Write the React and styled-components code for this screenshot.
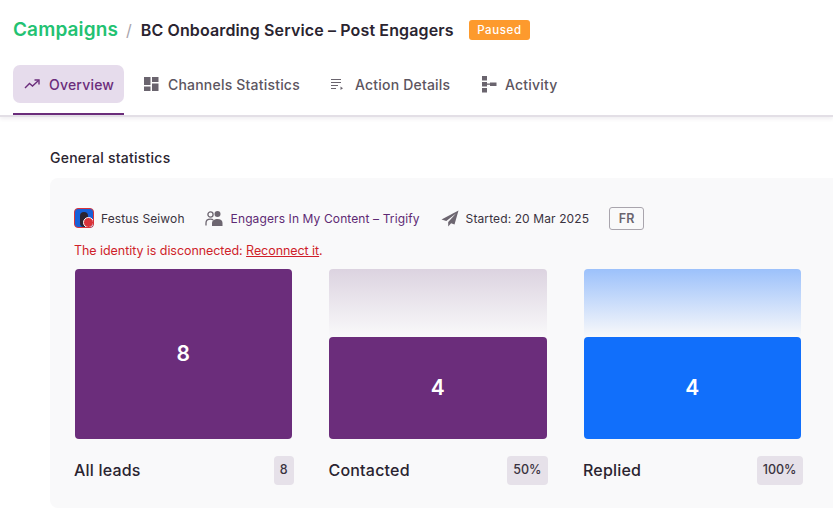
import React from "react";
import styled, { createGlobalStyle } from "styled-components";

const Global = createGlobalStyle`
  html, body { margin: 0; padding: 0; background: #fff; overflow: hidden; }
  body { width: 833px; height: 522px; font-family: "Inter", "Liberation Sans", sans-serif; color: #29222e; }
`;
const Page = styled.div`width: 833px; height: 522px; overflow: hidden;`;
const Header = styled.header`
  height: 117px; box-sizing: border-box; border-bottom: 2px solid #e3dfe6;
  box-shadow: 0 2px 4px rgba(60, 40, 80, 0.08); padding: 0 13px;
  display: flex; flex-direction: column;
`;
const TitleRow = styled.div`display: flex; align-items: center; height: 30px; margin-top: 15px;`;
const Crumb = styled.span`font-size: 19px; font-weight: 600; color: #22c272; letter-spacing: 0.12px;`;
const Slash = styled.span`font-size: 16px; color: #a8a3ac; margin: 0 9px 0 8px;`;
const Title = styled.h1`margin: 0; font-size: 16px; font-weight: 600; color: #2a2430; letter-spacing: 0.13px; white-space: nowrap;`;
const Status = styled.span`
  margin-left: 15px; background: #fd9a2d; color: #fff; font-size: 11.5px; font-weight: 500;
  letter-spacing: 0.6px; height: 20px; padding: 0 8.5px; border-radius: 3px; display: flex; align-items: center;
`;
const Tabs = styled.nav`display: flex; margin-top: 21px; gap: 0;`;
const Tab = styled.div`
  display: flex; flex-direction: column; width: ${p => p.$w}px; margin-right: ${p => p.$mr || 0}px;
  height: 50px; box-sizing: border-box; border-bottom: 2px solid ${p => (p.$active ? "#6b2d7b" : "transparent")};
`;
const TabInner = styled.div`
  display: flex; align-items: center; gap: ${p => p.$gap || 9}px; height: 38px; padding-left: 11px; border-radius: 7px;
  background: ${p => (p.$active ? "#e6dcec" : "transparent")};
  color: ${p => (p.$active ? "#6b2d7b" : "#5c5560")};
  font-size: 14px; font-weight: 500; letter-spacing: 0.2px; white-space: nowrap;
`;
const Main = styled.main`padding: 32px 0 0 50px;`;
const SectionTitle = styled.h2`margin: 0 0 11px; font-size: 14px; font-weight: 500; line-height: 18px; color: #2a2430; letter-spacing: 0.25px;`;
const Card = styled.section`
  width: 820px; height: 330px; box-sizing: border-box; background: #f9f9fa; border-radius: 8px 0 0 8px; padding: 28px 0 0 24px;
`;
const Meta = styled.div`display: flex; align-items: center; height: 24px; font-size: 12px; color: #3a3340; letter-spacing: 0.11px;`;
const Avatar = styled.div`
  position: relative; width: 20px; height: 20px; border-radius: 4px; background: #1660d8; border: 1px solid #d8333a;
  box-sizing: border-box; overflow: hidden; margin-right: 7px;
`;
const AvatarHead = styled.div`position: absolute; left: 5px; top: 3px; width: 8px; height: 15px; border-radius: 4px; background: #2b2430;`;
const AvatarDot = styled.div`position: absolute; right: -1px; bottom: -1px; width: 11px; height: 11px; border-radius: 50%; background: #d8333a; border: 1px solid #fff; box-sizing: border-box;`;
const MetaLink = styled.span`color: #5e2a74; margin-left: 8px; margin-right: 21px;`;
const Name = styled.span`margin-right: 20px;`;
const Started = styled.span`margin-left: 7px; margin-right: 20px;`;
const Lang = styled.span`
  width: 35px; height: 23px; box-sizing: border-box; border: 1px solid #a9a5ad; border-radius: 3px; color: #6a646e;
  font-size: 12.5px; font-weight: 600; display: flex; align-items: center; justify-content: center;
`;
const ErrorLine = styled.div`margin-top: 13px; height: 16px; line-height: 16px; font-size: 12.5px; letter-spacing: -0.06px; color: #cf1f2a;`;
const Reconnect = styled.span`text-decoration: underline;`;
const Stats = styled.div`display: flex; gap: 35px; margin-top: 10px;`;
const Stat = styled.div`width: 219.5px;`;
const Bar = styled.div`
  height: 170px; margin-left: 0.6px; width: 217.5px; display: flex; flex-direction: column;
`;
const Ghost = styled.div`
  height: ${p => p.$h}px; border-radius: 4px 4px 0 0;
  background: linear-gradient(to bottom, ${p => p.$from}, #f9f9fa);
`;
const Fill = styled.div`
  flex: 1; background: ${p => p.$c}; border-radius: 4px; color: #fff; font-size: 21px; font-weight: 600;
  display: flex; align-items: center; justify-content: center; padding-bottom: 2px;
`;
const StatFoot = styled.div`display: flex; justify-content: space-between; align-items: center; margin-top: 17px; height: 29px;`;
const StatLabel = styled.span`font-size: 16px; font-weight: 500; color: #2a2430; letter-spacing: 0.2px; padding-bottom: 2px;`;
const Pct = styled.span`
  height: 29px; padding: 0 ${p => p.$px}px 3px; background: #e6e1e9; border-radius: 4px; font-size: 12.5px; font-weight: 500; color: #3a3340;
  display: flex; align-items: center; box-sizing: border-box;
`;

const TrendIcon = () => (
  <svg width="16" height="16" viewBox="0 0 16 16" fill="none" stroke="#6b2d7b" strokeWidth="1.4">
    <path d="M1 12l4.5-4.5 3 2.5L14.5 4.5" /><path d="M10.5 4h4.5v4.5" />
  </svg>
);
const GridIcon = () => (
  <svg width="16" height="16" viewBox="0 0 16 16" fill="#6a646e">
    <rect x="1" y="1" width="6.5" height="8" /><rect x="9" y="1" width="6.5" height="5" />
    <rect x="1" y="10.5" width="6.5" height="4.5" /><rect x="9" y="7.5" width="6.5" height="7.5" />
  </svg>
);
const ListIcon = () => (
  <svg width="14" height="14" viewBox="0 0 14 14" fill="none" stroke="#6a646e" strokeWidth="1.2">
    <path d="M1 2.5h10M1 5.5h10M1 8.5h7M1 11.5h5" /><path d="M10.5 9.5v3.5l2.5-1.8z" fill="#6a646e" stroke="none" />
  </svg>
);
const TreeIcon = () => (
  <svg width="16" height="18" viewBox="0 0 16 18" fill="#6a646e">
    <rect x="1" y="1" width="5" height="4.5" /><rect x="1" y="7" width="5" height="4.5" />
    <rect x="1" y="13" width="5" height="4.5" /><rect x="9" y="7.5" width="6.5" height="3.5" />
    <rect x="6" y="8.5" width="3" height="1.3" />
  </svg>
);
const PeopleIcon = () => (
  <svg width="18" height="17" viewBox="0 0 18 17" fill="none" stroke="#6d6670" strokeWidth="1.3">
    <circle cx="5.5" cy="4.5" r="2.6" />
    <path d="M1 15.5v-2.5c0-2.4 2-3.8 4.5-3.8 1 0 2 .2 2.7.7" />
    <circle cx="12.5" cy="4" r="3" fill="#6d6670" stroke="none" />
    <path d="M7 16v-3c0-2.4 2.5-4 5.5-4s5 1.6 5 4v3z" fill="#6d6670" stroke="none" />
  </svg>
);
const SendIcon = () => (
  <svg width="18" height="17" viewBox="0 0 18 17" fill="#6d6670">
    <path d="M17.5 0.5L0.5 9.5l4.8 1.6L15 3.5 7.2 12v4.5l2.9-3.2 3.4 1.2z" />
  </svg>
);

export default function App() {
  return (
    <Page>
      <Global />
      <Header>
        <TitleRow>
          <Crumb>Campaigns</Crumb>
          <Slash>/</Slash>
          <Title>BC Onboarding Service – Post Engagers</Title>
          <Status>Paused</Status>
        </TitleRow>
        <Tabs>
          <Tab $w={111} $mr={8} $active><TabInner $active><TrendIcon />Overview</TabInner></Tab>
          <Tab $w={187}><TabInner><GridIcon />Channels Statistics</TabInner></Tab>
          <Tab $w={151}><TabInner $gap={11}><ListIcon />Action Details</TabInner></Tab>
          <Tab $w={100}><TabInner $gap={8}><TreeIcon />Activity</TabInner></Tab>
        </Tabs>
      </Header>
      <Main>
        <SectionTitle>General statistics</SectionTitle>
        <Card>
          <Meta>
            <Avatar><AvatarHead /><AvatarDot /></Avatar>
            <Name>Festus Seiwoh</Name>
            <PeopleIcon />
            <MetaLink>Engagers In My Content – Trigify</MetaLink>
            <SendIcon />
            <Started>Started: 20 Mar 2025</Started>
            <Lang>FR</Lang>
          </Meta>
          <ErrorLine>The identity is disconnected: <Reconnect>Reconnect it</Reconnect>.</ErrorLine>
          <Stats>
            <Stat>
              <Bar><Fill $c="#6b2d7b">8</Fill></Bar>
              <StatFoot><StatLabel>All leads</StatLabel><Pct $px={6}>8</Pct></StatFoot>
            </Stat>
            <Stat>
              <Bar><Ghost $h={68} $from="#dcd3e0" /><Fill $c="#6b2d7b">4</Fill></Bar>
              <StatFoot><StatLabel>Contacted</StatLabel><Pct $px={6.5}>50%</Pct></StatFoot>
            </Stat>
            <Stat>
              <Bar><Ghost $h={68} $from="#9cc1fb" /><Fill $c="#116ffb">4</Fill></Bar>
              <StatFoot><StatLabel>Replied</StatLabel><Pct $px={6}>100%</Pct></StatFoot>
            </Stat>
          </Stats>
        </Card>
      </Main>
    </Page>
  );
}
